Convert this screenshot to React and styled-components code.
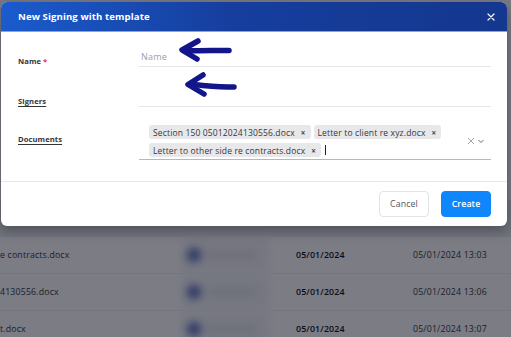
import React from "react";
import styled, { createGlobalStyle } from "styled-components";

const Global = createGlobalStyle`
  html, body { margin: 0; padding: 0; background: #ffffff; }
  body { font-family: "Open Sans", "Noto Sans", sans-serif; overflow: hidden; }
  * { box-sizing: border-box; }
`;

const Page = styled.div`
  width: 511px;
  height: 337px;
  position: relative;
  overflow: hidden;
  background: #ffffff;
  padding-top: 200px;
`;

const Table = styled.div`
  display: flex;
  flex-direction: column;
`;

const HeadRow = styled.div`
  height: 37px;
  background: #eceef2;
`;

const Row = styled.div`
  display: grid;
  grid-template-columns: 181px 89px 115px 1fr;
  height: 37px;
  border-bottom: 1px solid #f1f1f3;
  align-items: center;
  font-size: 8.8px;
  letter-spacing: 0.15px;
  color: #3c3d44;
`;

const Cell = styled.div`
  padding-left: ${(p) => p.$pad || 0}px;
  font-weight: ${(p) => (p.$bold ? 600 : 400)};
  color: ${(p) => (p.$bold ? "#15161b" : "#3c3d44")};
  white-space: nowrap;
  overflow: hidden;
`;

const BlurCell = styled.div`
  height: 100%;
  display: flex;
  align-items: center;
  gap: 6px;
  padding-left: 6px;
  background: #f4f5f8;
  filter: blur(4px);
`;

const Avatar = styled.div`
  width: 14px;
  height: 14px;
  border-radius: 50%;
  background: #5a70be;
`;

const BlurLine = styled.div`
  width: 50px;
  height: 6px;
  background: #dcdee5;
`;

const Overlay = styled.div`
  position: absolute;
  inset: 0;
  background: rgba(2, 4, 20, 0.52);
`;

const Modal = styled.div`
  position: absolute;
  left: 1px;
  top: 2px;
  width: 506px;
  background: #ffffff;
  border-radius: 6px;
  overflow: hidden;
  box-shadow: 0 4px 14px rgba(0, 0, 0, 0.35);
`;

const Header = styled.div`
  height: 30px;
  display: flex;
  align-items: center;
  justify-content: space-between;
  padding: 0 10px 0 17px;
  background: linear-gradient(90deg, #1b5bcd 0%, #163e9e 45%, #14378f 100%);
  border-bottom: 1px solid #8ea3cf;
`;

const Title = styled.div`
  color: #ffffff;
  font-size: 9.6px;
  font-weight: 700;
  letter-spacing: 0.1px;
`;

const Close = styled.button`
  border: 0;
  background: none;
  padding: 0;
  width: 12px;
  height: 12px;
  display: flex;
  align-items: center;
  justify-content: center;
  cursor: pointer;
`;

const Body = styled.div`
  position: relative;
  padding: 14px 16px 21px 17px;
  border-bottom: 1px solid #e6e8ee;
`;

const FormRow = styled.div`
  display: grid;
  grid-template-columns: 121px 1fr;
  align-items: center;
  margin-top: ${(p) => p.$mt || 0}px;
`;

const Label = styled.div`
  font-size: 7.6px;
  font-weight: 700;
  letter-spacing: 0.1px;
  color: #33343a;
  text-decoration: ${(p) => (p.$under ? "underline" : "none")};
  text-underline-offset: 1.5px;
  margin-top: ${(p) => p.$off || 0}px;
`;

const Req = styled.span`
  color: #e0334a;
  margin-left: 2px;
`;

const Field = styled.div`
  min-height: 21px;
  border-bottom: 1px solid ${(p) => (p.$active ? "#8fc1f5" : "#e4e6ec")};
  display: flex;
  align-items: center;
  padding: ${(p) => (p.$tags ? "3px 0 2px 10px" : "0 0 0 2px")};
  font-size: 9px;
  letter-spacing: 0.2px;
  color: #9aa0ad;
`;

const Tags = styled.div`
  flex: 1;
  display: flex;
  flex-wrap: wrap;
  gap: 4px 3px;
  align-items: center;
`;

const Tag = styled.span`
  display: inline-flex;
  align-items: center;
  gap: 6px;
  height: 14px;
  padding: 0 5px 0 4px;
  background: #e8e8ea;
  border-radius: 3px;
  font-size: 8.5px;
  letter-spacing: 0.15px;
  color: #35363c;
`;

const TagX = styled.span`
  font-size: 8px;
  font-weight: 700;
  color: #45464c;
`;

const Caret = styled.span`
  width: 1px;
  height: 10px;
  background: #222;
  margin-left: 1px;
`;

const Indicators = styled.div`
  display: flex;
  align-items: center;
  gap: 2px;
  padding-right: 6px;
`;

const Arrows = styled.svg`
  position: absolute;
  left: 0;
  top: 0;
  pointer-events: none;
`;

const Footer = styled.div`
  display: flex;
  justify-content: flex-end;
  gap: 12px;
  padding: 9px 16px 9px 0;
`;

const Button = styled.button`
  height: 26px;
  width: 50px;
  border-radius: 4px;
  font-family: inherit;
  font-size: 8.8px;
  letter-spacing: 0.1px;
  font-weight: ${(p) => (p.$primary ? 600 : 500)};
  border: 1px solid ${(p) => (p.$primary ? "#0f86fb" : "#e2e3e8")};
  background: ${(p) => (p.$primary ? "#0f86fb" : "#ffffff")};
  color: ${(p) => (p.$primary ? "#ffffff" : "#55565d")};
  cursor: pointer;
`;

const rows = [
  { name: "e contracts.docx", date: "05/01/2024", time: "05/01/2024 13:03" },
  { name: "4130556.docx", date: "05/01/2024", time: "05/01/2024 13:06" },
  { name: "t.docx", date: "05/01/2024", time: "05/01/2024 13:07" },
];

export default function App() {
  return (
    <>
      <Global />
      <Page>
        <Table>
          <HeadRow />
          {rows.map((r) => (
            <Row key={r.time}>
              <Cell>{r.name}</Cell>
              <BlurCell>
                <Avatar />
                <BlurLine />
              </BlurCell>
              <Cell $pad={26} $bold>{r.date}</Cell>
              <Cell $pad={28}>{r.time}</Cell>
            </Row>
          ))}
        </Table>
        <Overlay />
        <Modal>
          <Header>
            <Title>New Signing with template</Title>
            <Close aria-label="close">
              <svg width="8" height="8" viewBox="0 0 8 8">
                <path d="M1 1L7 7M7 1L1 7" stroke="#ffffff" strokeWidth="1.2" strokeLinecap="round" />
              </svg>
            </Close>
          </Header>
          <Body>
            <FormRow>
              <Label $off={8}>
                Name<Req>*</Req>
              </Label>
              <Field>Name</Field>
            </FormRow>
            <FormRow $mt={19}>
              <Label $under $off={8}>Signers</Label>
              <Field />
            </FormRow>
            <FormRow $mt={15}>
              <Label $under $off={-4}>Documents</Label>
              <Field $active $tags>
                <Tags>
                  <Tag>
                    Section 150 05012024130556.docx<TagX>×</TagX>
                  </Tag>
                  <Tag>
                    Letter to client re xyz.docx<TagX>×</TagX>
                  </Tag>
                  <Tag>
                    Letter to other side re contracts.docx<TagX>×</TagX>
                  </Tag>
                  <Caret />
                </Tags>
                <Indicators>
                  <svg width="8" height="8" viewBox="0 0 8 8">
                    <path d="M1 1L7 7M7 1L1 7" stroke="#9a9ca4" strokeWidth="0.9" />
                  </svg>
                  <svg width="8" height="8" viewBox="0 0 8 8">
                    <path d="M1.5 3L4 5.5L6.5 3" stroke="#6b6d75" strokeWidth="1" fill="none" />
                  </svg>
                </Indicators>
              </Field>
            </FormRow>
            <Arrows width="506" height="110" viewBox="0 0 506 110">
              <g stroke="#12168a" strokeWidth="5.5" strokeLinecap="round" strokeLinejoin="round" fill="none">
                <path d="M228 18.5C210 18.5 196 19 183 18.5" />
                <path d="M197 9L181 18L196 27" />
                <path d="M233 55C215 55 200 53 189 52.5" />
                <path d="M202 43L187 52.5L203 62" />
              </g>
            </Arrows>
          </Body>
          <Footer>
            <Button>Cancel</Button>
            <Button $primary>Create</Button>
          </Footer>
        </Modal>
      </Page>
    </>
  );
}
